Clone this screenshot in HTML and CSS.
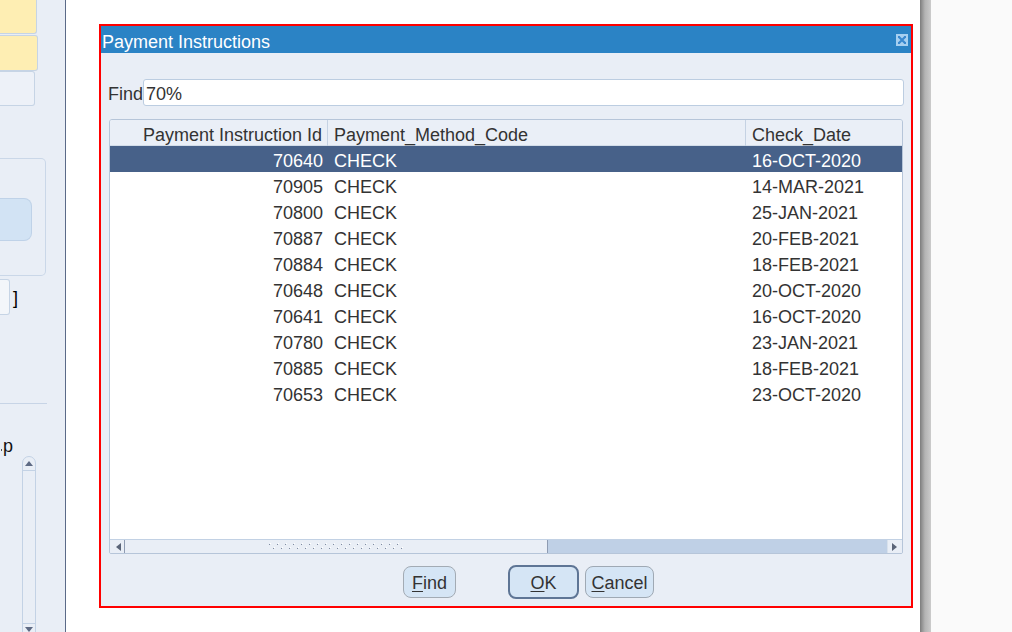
FILE: index.html
```html
<!DOCTYPE html>
<html>
<head>
<meta charset="utf-8">
<title>Payment Instructions</title>
<link rel="stylesheet" href="styles.css">
</head>
<body>
<div class="desk">
  <aside class="side">
    <div class="fld f1"></div>
    <div class="fld f2"></div>
    <div class="fld f3"></div>
    <div class="group"><div class="gbtn"></div></div>
    <div class="smallrow"><div class="fld f4"></div><span class="brk">]</span></div>
    <div class="hr"></div>
    <div class="prow">
      <div class="plabel"><span class="dot"></span><span>p</span></div>
      <div class="vscroll">
        <div class="vbtn up"><svg width="8" height="5" viewBox="0 0 8 5"><path d="M0 5 L4 0 L8 5 Z" fill="#5e6a84"/></svg></div>
        <div class="vtrack"></div>
        <div class="vbtn down"><svg width="8" height="5" viewBox="0 0 8 5"><path d="M0 0 L4 5 L8 0 Z" fill="#5e6a84"/></svg></div>
      </div>
    </div>
  </aside>

  <main class="area">
    <div class="dialog">
      <div class="titlebar">
        <span class="title">Payment Instructions</span>
        <span class="close"><svg width="12" height="12" viewBox="0 0 12 12"><rect width="12" height="12" fill="#a6cff0"/><path d="M3 3 L9 9 M9 3 L3 9" stroke="#3a89cf" stroke-width="2.2"/><path d="M2 2h2v1H3v1H2z M10 2H8v1h1v1h1z M2 10h2V9H3V8H2z M10 10H8V9h1V8h1z" fill="#3a89cf"/></svg></span>
      </div>
      <div class="dbody">
        <div class="findrow">
          <label class="flabel">Find</label>
          <div class="input">70%</div>
        </div>
        <div class="table">
          <div class="thead">
            <div class="th c1">Payment Instruction Id</div>
            <div class="th c2">Payment_Method_Code</div>
            <div class="th c3">Check_Date</div>
          </div>
          <div class="tbody">
            <div class="tr sel"><div class="td c1">70640</div><div class="td c2">CHECK</div><div class="td c3">16-OCT-2020</div></div>
            <div class="tr"><div class="td c1">70905</div><div class="td c2">CHECK</div><div class="td c3">14-MAR-2021</div></div>
            <div class="tr"><div class="td c1">70800</div><div class="td c2">CHECK</div><div class="td c3">25-JAN-2021</div></div>
            <div class="tr"><div class="td c1">70887</div><div class="td c2">CHECK</div><div class="td c3">20-FEB-2021</div></div>
            <div class="tr"><div class="td c1">70884</div><div class="td c2">CHECK</div><div class="td c3">18-FEB-2021</div></div>
            <div class="tr"><div class="td c1">70648</div><div class="td c2">CHECK</div><div class="td c3">20-OCT-2020</div></div>
            <div class="tr"><div class="td c1">70641</div><div class="td c2">CHECK</div><div class="td c3">16-OCT-2020</div></div>
            <div class="tr"><div class="td c1">70780</div><div class="td c2">CHECK</div><div class="td c3">23-JAN-2021</div></div>
            <div class="tr"><div class="td c1">70885</div><div class="td c2">CHECK</div><div class="td c3">18-FEB-2021</div></div>
            <div class="tr"><div class="td c1">70653</div><div class="td c2">CHECK</div><div class="td c3">23-OCT-2020</div></div>
          </div>
          <div class="hscroll">
            <div class="hbtn left"><svg width="5" height="8" viewBox="0 0 5 8"><path d="M5 0 L0 4 L5 8 Z" fill="#5a6478"/></svg></div>
            <div class="thumb">
              <svg class="grip" width="138" height="8" viewBox="0 0 138 8">
                <defs>
                  <pattern id="g" width="8" height="8" patternUnits="userSpaceOnUse">
                    <rect x="3" y="0" width="1" height="1" fill="#ffffff"/>
                    <rect x="2" y="1" width="1" height="1" fill="#7f8ba1"/>
                    <rect x="7" y="4" width="1" height="1" fill="#ffffff"/>
                    <rect x="6" y="5" width="1" height="1" fill="#7f8ba1"/>
                  </pattern>
                </defs>
                <rect width="138" height="8" fill="url(#g)"/>
              </svg>
            </div>
            <div class="htrack"></div>
            <div class="hbtn right"><svg width="5" height="8" viewBox="0 0 5 8"><path d="M0 0 L5 4 L0 8 Z" fill="#5a6478"/></svg></div>
          </div>
        </div>
        <div class="buttons">
          <button class="btn bfind"><u>F</u>ind</button>
          <button class="btn bok"><u>O</u>K</button>
          <button class="btn bcancel"><u>C</u>ancel</button>
        </div>
      </div>
    </div>
  </main>

  <div class="sep"></div>
  <div class="rightpane"></div>
</div>
</body>
</html>
```

FILE: styles.css
```css
* { box-sizing: border-box; }
html, body { margin: 0; height: 632px; overflow: hidden; }
body {
  font-family: "Liberation Sans", Arial, sans-serif;
  font-size: 18px;
  color: #333;
  background: #fff;
}
.desk { display: flex; height: 632px; }

/* left side panel */
.side {
  width: 66px; flex: none;
  background: #e9eef6;
  border-right: 1px solid #5b6a88;
  display: flex; flex-direction: column;
  overflow: hidden;
}
.side > * { flex: none; }
.fld { border: 1px solid #c6d4e5; border-left: none; }
.f1 { width: 37px; height: 34px; background: #feeeb3; border-top: none; border-radius: 0 0 3px 0; }
.f2 { width: 38px; height: 36px; margin-top: 1px; background: #feeeb3; border-radius: 0 3px 3px 0; }
.f3 { width: 35px; height: 35px; background: #edf1f8; border-radius: 0 3px 3px 0; }
.group {
  width: 46px; height: 118px; margin-top: 52px;
  border: 1px solid #cad7e8; border-left: none; border-radius: 0 5px 5px 0;
  padding-top: 39px;
}
.gbtn {
  width: 32px; height: 43px;
  background: #d2e3f4; border: 1px solid #bfd2e8; border-left: none;
  border-radius: 0 8px 8px 0;
}
.smallrow { display: flex; align-items: center; margin-top: 3px; height: 36px; }
.f4 { width: 10px; height: 36px; background: #f3f6fa; border-radius: 0 3px 3px 0; }
.brk { color: #000; margin-left: 3px; line-height: 20px; padding-top: 2px; }
.hr { width: 47px; height: 1px; background: #c7d4e6; margin-top: 88px; }
.prow { display: flex; align-items: flex-start; margin-top: 32px; }
.plabel {
  width: 13px; display: flex; align-items: flex-end; justify-content: flex-end;
  white-space: nowrap; line-height: 20px; color: #111;
}
.dot { width: 1px; height: 2px; background: #555; margin-bottom: 5px; margin-right: 1px; }
.vscroll {
  width: 14px; height: 180px; margin-left: 9px; margin-top: 20px;
  border: 1px solid #c3d2e5; border-radius: 7px 7px 0 0;
  background: #e9eef6;
  display: flex; flex-direction: column;
}
.vbtn { height: 14px; display: flex; align-items: center; justify-content: center; flex: none; }
.vbtn.up { border-bottom: 1px solid #c3d2e5; }
.vbtn.down { border-top: 1px solid #c3d2e5; height: 12px; align-items: flex-start; padding-top: 3px; }
.vtrack { flex: 1; }

/* main area */
.area { width: 854px; flex: none; padding: 24px 0 0 33px; background: #fff; }
.sep {
  width: 11px; flex: none;
  background: linear-gradient(to right, #7c7c7c 0, #949494 2px, #b4b4b4 5px, #cbcbcb 11px);
}
.rightpane { flex: 1; background: #fafafa; }

/* dialog */
.dialog {
  width: 814px; height: 584px;
  border: 2px solid #ff0000;
  background: #e9eef6;
  display: flex; flex-direction: column;
}
.titlebar {
  height: 27px; flex: none;
  background: #2b83c5; color: #fff;
  display: flex; align-items: center; justify-content: space-between;
  padding: 0 3px 0 1px;
}
.title { line-height: 22px; padding-top: 5px; height: 27px; }
.close { width: 12px; height: 12px; display: block; }
.close svg { display: block; }
.dbody { flex: 1; padding: 26px 7px 0 7px; display: flex; flex-direction: column; }

.findrow { display: flex; align-items: center; height: 27px; }
.flabel { width: 35px; flex: none; line-height: 24px; padding-top: 3px; height: 27px; }
.input {
  flex: 1; height: 27px;
  background: #fff; border: 1px solid #bccde1; border-radius: 3px;
  padding-left: 2px; padding-top: 3px; line-height: 22px;
}

.table {
  margin-top: 13px; margin-left: 1px;
  width: 794px; height: 435px; flex: none;
  border: 1px solid #b6c5d9; border-radius: 3px 3px 2px 2px;
  display: flex; flex-direction: column;
  overflow: hidden;
}
.thead, .tr { display: grid; grid-template-columns: 218px 418px 1fr; }
.thead { height: 26px; flex: none; background: #eaeff7; border-bottom: 1px solid #d3dde9; }
.th { line-height: 22px; padding-top: 4px; white-space: nowrap; }
.th.c1, .th.c2 { border-right: 1px solid #c5d2e3; }
.c1 { text-align: right; padding-right: 5px; }
.c2, .c3 { padding-left: 6px; }
.tbody { height: 393px; flex: none; background: #fff; }
.tr { height: 26px; }
.td { height: 26px; line-height: 24px; padding-top: 3px; white-space: nowrap; overflow: hidden; }
.tr.sel { background: #476189; color: #fff; }

.hscroll {
  height: 14px; flex: none;
  border-top: 1px solid #c2d1e4;
  display: flex; background: #e9eef6;
}
.hbtn { width: 15px; flex: none; display: flex; align-items: center; justify-content: center; background: #e9eef6; }
.hbtn.left { border-right: 1px solid #8e9bb2; border-radius: 6px 0 0 6px; padding-left: 2px; }
.hbtn.right { width: 15px; border-left: 1px solid #d8e1ec; border-radius: 0 6px 6px 0; padding-right: 1px; }
.thumb {
  width: 423px; flex: none;
  background: #e9eef6; border-right: 1px solid #8e9bb2;
  display: flex; align-items: center; justify-content: center;
}
.grip { display: block; }
.htrack { flex: 1; background: #bfd0e6; }

.buttons { display: flex; align-items: center; margin-top: 11px; padding-left: 295px; height: 34px; }
.btn {
  font-family: "Liberation Sans", Arial, sans-serif;
  font-size: 18px; color: #333;
  background: #d5e5f5;
  border: 1px solid #a3abb4; border-radius: 8px;
  height: 32px; padding: 2px 0 0 0;
  display: flex; align-items: center; justify-content: center;
}
.btn u { text-underline-offset: 2px; }
.bfind { width: 53px; }
.bok { width: 71px; height: 34px; margin-left: 52px; border: 2px solid #5e7595; }
.bcancel { width: 69px; margin-left: 6px; border-color: #9fa9b4; }
```
